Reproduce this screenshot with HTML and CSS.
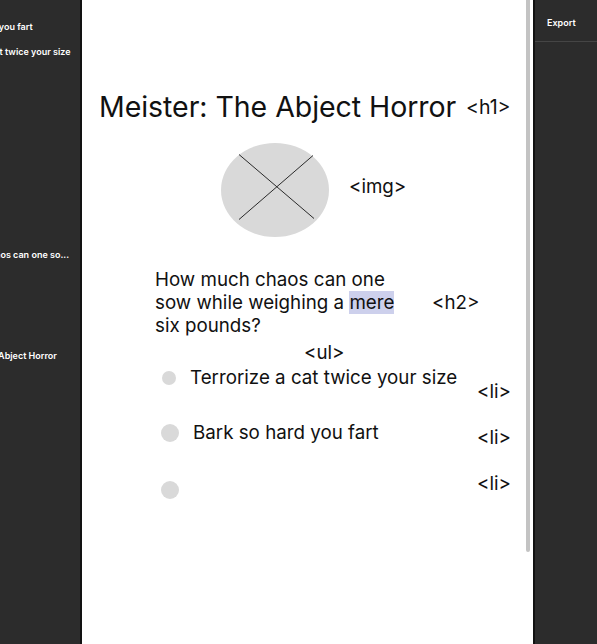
FILE: index.html
```html
<!DOCTYPE html>
<html lang="en">
<head>
<meta charset="utf-8">
<title>Meister wireframe</title>
<link rel="stylesheet" href="styles.css">
</head>
<body>
<div class="app">
  <aside class="layers">
    <div class="layer-list">
      <div class="layer l1">Bark so hard you fart</div>
      <div class="layer l2">Terrorize a cat twice your size</div>
      <div class="layer l3">How much chaos can one so...</div>
      <div class="layer l4">Meister: The Abject Horror</div>
    </div>
  </aside>
  <main class="canvas">
    <div class="row row-h1">
      <h1 class="title">Meister: The Abject Horror</h1>
      <span class="tag tag-h1">&lt;h1&gt;</span>
    </div>
    <div class="row row-img">
      <svg class="placeholder" width="108" height="94" viewBox="0 0 108 94" aria-hidden="true">
        <ellipse cx="54" cy="47" rx="54" ry="47" fill="#d9d9d9"/>
        <line x1="18" y1="11.5" x2="93" y2="75.5" stroke="#2a2a2a" stroke-width="1"/>
        <line x1="92" y1="12.5" x2="18" y2="76.5" stroke="#2a2a2a" stroke-width="1"/>
      </svg>
      <span class="tag tag-img">&lt;img&gt;</span>
    </div>
    <div class="row row-h2">
      <h2 class="question">How much chaos can one<br>sow while weighing a <mark class="sel">mere</mark><br>six pounds?</h2>
      <span class="tag tag-h2">&lt;h2&gt;</span>
    </div>
    <div class="row row-ul">
      <span class="tag tag-ul">&lt;ul&gt;</span>
    </div>
    <ul class="list">
      <li class="item item1">
        <span class="dot dot-sm"></span>
        <span class="item-text t1">Terrorize a cat twice your size</span>
        <span class="tag tag-li li1">&lt;li&gt;</span>
      </li>
      <li class="item item2">
        <span class="dot"></span>
        <span class="item-text t2">Bark so hard you fart</span>
        <span class="tag tag-li li2">&lt;li&gt;</span>
      </li>
      <li class="item item3">
        <span class="dot"></span>
        <span class="item-text t3"></span>
        <span class="tag tag-li li3">&lt;li&gt;</span>
      </li>
    </ul>
    <div class="scrollbar"></div>
  </main>
  <aside class="props">
    <div class="props-head">Export</div>
  </aside>
</div>
</body>
</html>
```

FILE: styles.css
```css
* { box-sizing: border-box; }
html, body { margin: 0; padding: 0; }
body {
  width: 597px;
  height: 644px;
  overflow: hidden;
  font-family: Inter, "Noto Sans", sans-serif;
  background: #2c2c2c;
}
.app {
  display: flex;
  width: 597px;
  height: 644px;
}

/* left layers panel */
.layers {
  width: 82px;
  flex: none;
  background: #2c2c2c;
  border-right: 2px solid #121212;
  overflow: hidden;
}
.layer-list {
  display: flex;
  flex-direction: column;
  margin-left: -65px;
  width: 200px;
}
.layer {
  color: #ffffff;
  font-size: 9px;
  font-weight: 600;
  height: 12px;
  line-height: 12px;
  white-space: nowrap;
}
.l1 { margin-top: 21px; padding-left: 7px; }
.l2 { margin-top: 13px; padding-left: 5px; }
.l3 { margin-top: 191px; padding-left: 1px; }
.l4 { margin-top: 89px; padding-left: 6px; }

/* canvas */
.canvas {
  position: relative;
  width: 451px;
  flex: none;
  background: #ffffff;
  color: #111;
  padding-top: 90px;
}
.row {
  display: flex;
  align-items: center;
}
.tag {
  font-size: 18.75px;
  color: #111;
  line-height: 22px;
  white-space: nowrap;
}
.row-h1 { padding-left: 17px; height: 34px; }
.title {
  margin: 0;
  font-size: 28.5px;
  font-weight: 400;
  line-height: 34px;
  width: 367px;
  white-space: nowrap;
  letter-spacing: -0.05px;
}
.tag-h1 { font-size: 19.5px; }

.row-img { margin-top: 19px; padding-left: 139px; height: 94px; }
.placeholder { display: block; flex: none; }
.tag-img { margin-left: 20px; margin-top: -6px; }

.row-h2 { margin-top: 31px; padding-left: 73px; align-items: center; }
.question {
  margin: 0;
  font-size: 18.75px;
  font-weight: 400;
  line-height: 23px;
  width: 277px;
  white-space: nowrap;
}
.sel {
  background: #cdd0ec;
  color: inherit;
}
.tag-h2 { margin-top: 1px; }

.row-ul { margin-top: 5px; padding-left: 222px; height: 22px; }

.list {
  list-style: none;
  margin: 0;
  padding: 0;
}
.item {
  display: flex;
  align-items: center;
  height: 22px;
  position: relative;
}
.dot {
  width: 18px;
  height: 18px;
  border-radius: 50%;
  background: #d9d9d9;
  flex: none;
  margin-left: 79px;
}
.dot-sm { width: 14px; height: 14px; margin-left: 80px; }
.item-text {
  font-size: 18.75px;
  line-height: 22px;
  white-space: nowrap;
}
.t1 { margin-left: 14px; width: 287px; }
.t2 { margin-left: 14px; width: 284px; }
.t3 { margin-left: 0; width: 298px; }
.item1 { margin-top: 3px; }
.item2 { margin-top: 33px; }
.item3 { margin-top: 35px; }
.li1 { margin-top: 28px; }
.li2 { margin-top: 9px; }
.li3 { margin-top: -12px; }

.scrollbar {
  position: absolute;
  top: 0;
  right: 3px;
  width: 4px;
  height: 552px;
  background: #c3c3c3;
  border-radius: 0 0 2px 2px;
}

/* right properties panel */
.props {
  flex: 1;
  background: #2c2c2c;
  border-left: 2px solid #121212;
}
.props-head {
  height: 42px;
  border-bottom: 1px solid #454545;
  color: #ffffff;
  font-size: 9px;
  font-weight: 600;
  padding: 17px 0 0 12px;
  line-height: 12px;
}
```
